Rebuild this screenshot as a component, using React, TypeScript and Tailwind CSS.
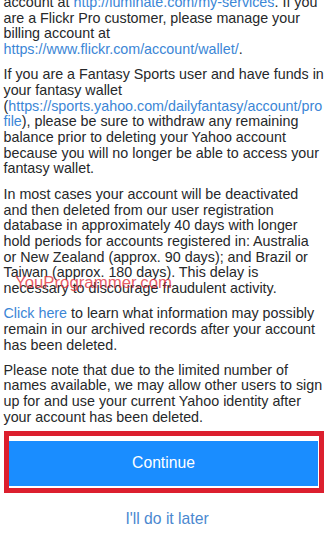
export default function App() {
  return (
    <div
      className="relative w-[334px] h-[536px] overflow-hidden bg-white text-[#26282a]"
      style={{ fontFamily: '"Liberation Sans", Arial, sans-serif' }}
    >
      {/* Body copy */}
      <div className="-mt-[5px] pl-[3.5px] pr-[10px] text-[14.3px] leading-[15.7px]">
        <p>
          account at <a className="text-[#3b86d6]">http://luminate.com/my-services</a>. If you
          are a Flickr Pro customer, please manage your billing account at{" "}
          <a className="text-[#3b86d6]">https://www.flickr.com/account/wallet/</a>.
        </p>
        <p className="mt-[9.4px]">
          If you are a Fantasy Sports user and have funds in your fantasy wallet (
          <a className="text-[#3b86d6]">
            https://sports.yahoo.com/dailyfantasy/account/pro
            <br />
            file
          </a>
          ), please be sure to withdraw any remaining balance prior to deleting your Yahoo
          account because you will no longer be able to access your fantasy wallet.
        </p>
        <p className="mt-[9.8px]">
          In most cases your account will be deactivated and then deleted from our user
          registration database in approximately 40 days with longer hold periods for accounts
          registered in: Australia or New Zealand (approx. 90 days); and Brazil or Taiwan
          (approx. 180 days). This delay is necessary to discourage fraudulent activity.
        </p>
        <p className="mt-[9.4px]">
          <a className="text-[#3b86d6]">Click here</a> to learn what information may possibly
          remain in our archived records after your account has been deleted.
        </p>
        <p className="mt-[9.4px]">
          Please note that due to the limited number of names available, we may allow other
          users to sign up for and use your current Yahoo identity after your account has been
          deleted.
        </p>
      </div>

      {/* Highlighted button */}
      <div className="mt-[5px] ml-[4px] w-[320px] h-[62px] border-[5px] border-[#dc1f2e] pt-[5px] pr-[1px] pb-[2px]">
        <button className="w-full h-full bg-[#1a8dff] text-white text-[15.7px] leading-none">
          Continue
        </button>
      </div>

      <div className="mt-[17px] text-center text-[15.7px] leading-[18px] text-[#4a88d0]">
        I'll do it later
      </div>

      {/* Watermark */}
      <div className="absolute left-[15px] top-[273px] text-[16.8px] leading-[20px] text-[#e0303a]/80 pointer-events-none">
        YouProgrammer.com
      </div>
    </div>
  );
}
